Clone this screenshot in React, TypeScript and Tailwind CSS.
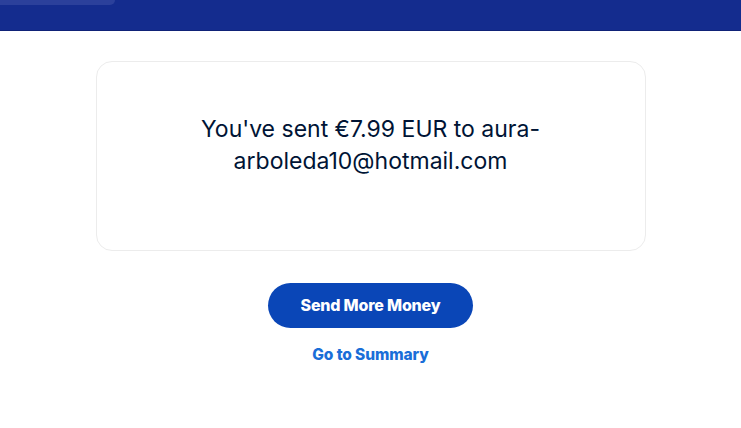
import React from 'react';

const App: React.FC = () => {
  return (
    <div className="min-h-screen bg-white font-['Inter','Liberation_Sans',sans-serif]">
      <header className="h-[31px] bg-[#142c8e] border-b border-[#0f2277]">
        <div className="h-[5px] w-[115px] rounded-br-[14px] bg-[#2b409b]" />
      </header>
      <main className="flex flex-col items-center pt-[30px]">
        <div className="w-[550px] h-[190px] rounded-[16px] border border-[#ececec] flex justify-center px-[100px] pt-[51px]">
          <p className="text-[23px] leading-[32px] text-[#001435] text-center">
            You've sent €7.99 EUR to aura-arboleda10@hotmail.com
          </p>
        </div>
        <button className="mt-[32px] h-[45px] w-[205px] rounded-full bg-[#0a46b7] text-white text-[16px] leading-[20px] pb-[2px] font-extrabold tracking-[-0.2px]">
          Send More Money
        </button>
        <a href="#" className="mt-[15px] text-[15.5px] font-extrabold text-[#1a6ed8] tracking-[-0.1px]">
          Go to Summary
        </a>
      </main>
    </div>
  );
};

export default App;
